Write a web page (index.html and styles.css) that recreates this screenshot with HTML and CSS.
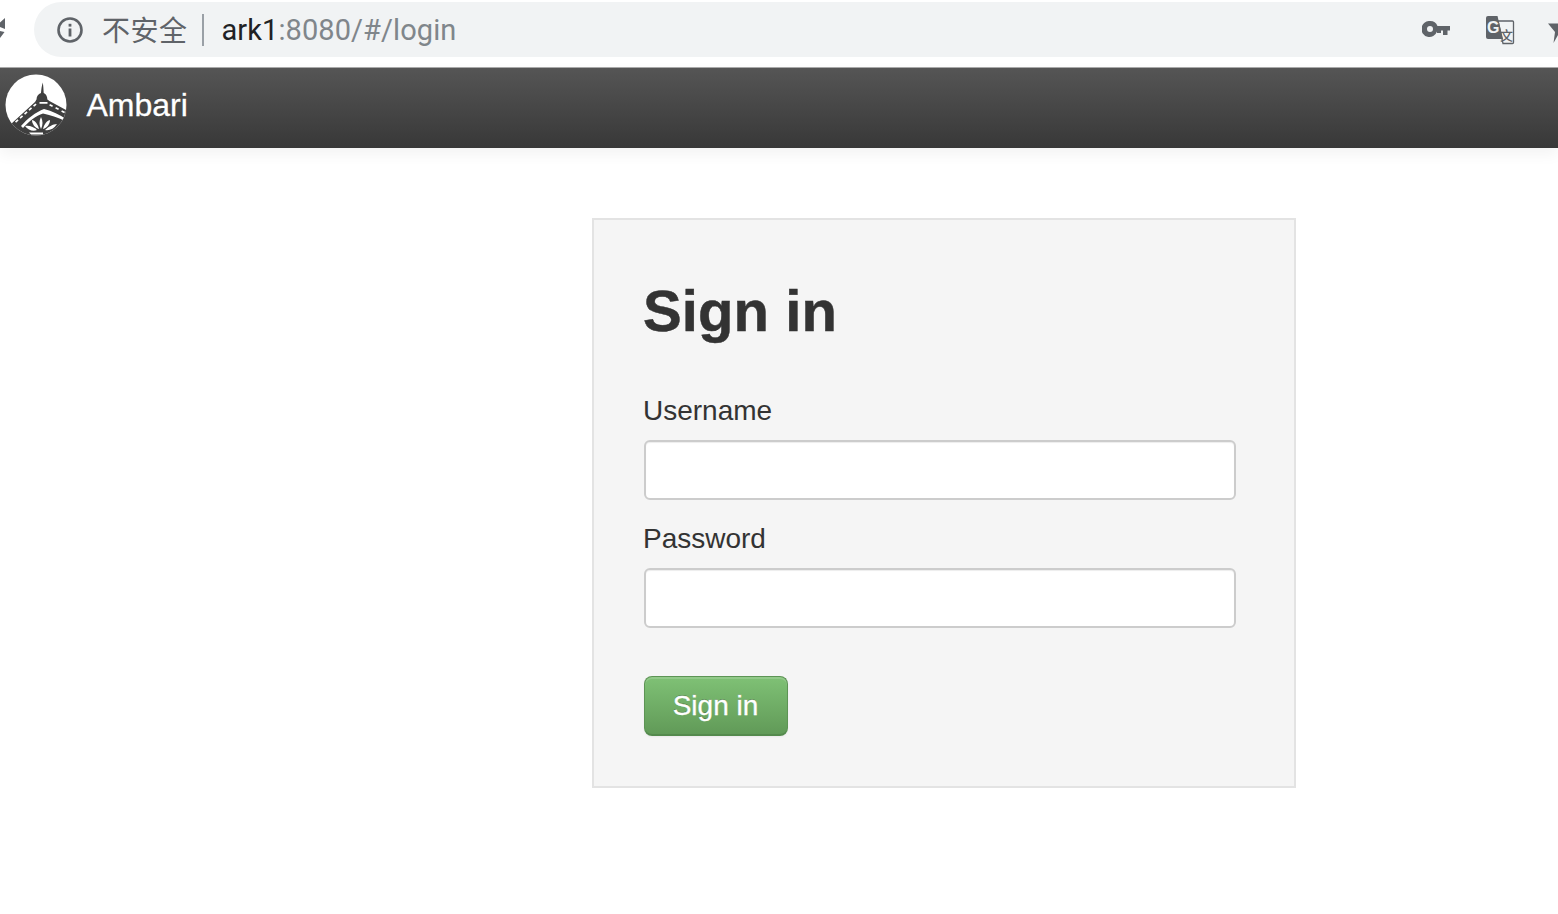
FILE: index.html
```html
<!DOCTYPE html>
<html lang="zh">
<head>
<meta charset="utf-8">
<title>Ambari</title>
<link rel="stylesheet" href="styles.css">
</head>
<body>
<header class="toolbar">
  <svg class="reload" viewBox="0 0 5 20" aria-hidden="true"><path d="M5 0V11L0 9V4.500z M0 13L4.500 14L0 20z" fill="#5f6368"/></svg>
  <div class="omnibox">
    <svg class="info" viewBox="0 0 28 28" aria-hidden="true"><circle cx="14" cy="14" r="11.500" fill="none" stroke="#5f6368" stroke-width="2.600"/><rect x="12.600" y="12.500" width="2.800" height="8" fill="#5f6368"/><rect x="12.600" y="7.800" width="2.800" height="2.800" fill="#5f6368"/></svg>
    <span class="insecure">不安全</span>
    <span class="sep"></span>
    <span class="url"><span class="host">ark1</span>:8080/#/login</span>
    <div class="actions">
      <svg class="key" viewBox="0 0 28 16" aria-hidden="true"><path fill-rule="evenodd" d="M8 0a8 8 0 0 1 7.500 5H28v4.500h-2.500V14H21V9.500h-2V12h-4V10.500A8 8 0 1 1 8 0zM8 5a3 3 0 1 0 0 6a3 3 0 0 0 0-6z" fill="#5f6368"/></svg>
      <svg class="translate" viewBox="0 0 28 28" aria-hidden="true">
        <path d="M12 5h14.500a1 1 0 0 1 1 1v20.500a1 1 0 0 1-1 1H17L12 5z" fill="#f1f3f4" stroke="#5f6368" stroke-width="1.300"/>
        <path d="M2 0h9.500l5.500 23H2a2 2 0 0 1-2-2V2a2 2 0 0 1 2-2z" fill="#5f6368"/>
        <text x="1" y="16.500" class="tr-g">G</text>
        <text x="14" y="23.500" class="tr-z">文</text>
      </svg>
      <svg class="star" viewBox="0 0 10 28" aria-hidden="true"><path d="M0 7.500H10V19L5.500 27L7 16z" fill="#5f6368"/></svg>
    </div>
  </div>
</header>
<nav class="navbar">
  <svg class="logo" viewBox="0 0 62 62" aria-hidden="true">
    <clipPath id="disc"><circle cx="31" cy="31" r="30.500"/></clipPath>
    <circle cx="31" cy="31" r="30.500" fill="#fff"/>
    <g clip-path="url(#disc)" fill="#3f3f3f">
      <path d="M37.800 8.500c.5 3 .7 7 .9 10.500 2.500 1 3.500 3.500 3.700 6.500l2 1.500L62 36.500V62H0V57L6 50 30 28l1.500-2.500c.2-3 1.500-5.500 4.500-6.500.3-3.500.8-7.500 1.800-10.500z"/>
    </g>
    <g clip-path="url(#disc)" fill="#fff">
      <path d="M34.500 28h8v1.800h-8zM28 31.500l2.500-2 1.100 1.300-2.500 2zM23.500 35.500l2.500-2.200 1.100 1.200-2.500 2.200zM19 39.500l2.500-2.200 1.100 1.200-2.500 2.200zM14.500 43.500l2.500-2.200 1.100 1.200-2.500 2.200zM10 47.500l2.500-2.200 1.100 1.200-2.500 2.200zM45 30l3 1.400-.8 1.500-3-1.400zM51 33l3 1.500-.8 1.500-3-1.500zM57 36.200l3 1.500-.8 1.500-3-1.500z"/>
      <path d="M39 35C31 38 22 45 16 52L18 54C24 47 31 42 38 39.500C46 41 54 44 60 47L61 45C55 41 47 37 39 35z"/>
      <path d="M36 43C38 47 38 51 36 55C34 51 34 47 36 43z"/>
      <path d="M27 46C31 47 33 51 34 55C30 54 27 50 27 46z"/>
      <path d="M45 46C41 47 39 51 38 55C42 54 45 50 45 46z"/>
      <path d="M20 52C24 51 29 53 32 56C28 58 23 56 20 52z"/>
      <path d="M52 50C48 50 43 53 40 56C44 57 49 55 52 50z"/>
      <path d="M24 58.500H38V60.500H26z"/>
    </g>
  </svg>
  <a class="brand">Ambari</a>
</nav>
<main class="page">
  <form class="card">
    <h2 class="title">Sign in</h2>
    <div class="field">
      <label class="label" for="u">Username</label>
      <input class="input" id="u" type="text">
    </div>
    <div class="field">
      <label class="label" for="p">Password</label>
      <input class="input" id="p" type="password">
    </div>
    <button class="btn" type="button">Sign in</button>
  </form>
</main>
</body>
</html>
```
FILE: styles.css
```css
* { box-sizing: border-box; }
html, body { margin: 0; padding: 0; height: 100%; }
body {
  background: #fff;
  overflow: hidden;
  font-family: "Liberation Sans", Arial, sans-serif;
  color: #333;
}
.toolbar {
  display: flex;
  height: 67px;
  padding-top: 2px;
  padding-bottom: 10px;
  background: #fff;
}
.reload { width: 5px; height: 20px; margin: 16px 29px 0 0; flex: none; }
.omnibox {
  flex: 1;
  display: flex;
  align-items: center;
  height: 55px;
  padding-left: 22px;
  background: #f1f3f4;
  border-radius: 28px 0 0 28px;
}
.info { width: 28px; height: 28px; flex: none; margin-top: 1px; }
.insecure {
  margin: 0 0 2px 18px;
  font: 28px/36px "Noto Sans CJK SC", sans-serif;
  color: #5f6368;
  letter-spacing: .5px;
}
.sep { width: 2px; height: 32px; margin-left: 14px; background: #9aa0a6; }
.url {
  margin-left: 18px;
  font: 29px/36px Roboto, sans-serif;
  letter-spacing: .08px;
  color: #80868b;
}
.host { color: #202124; }
.actions { margin-left: auto; display: flex; align-items: center; }
.key { width: 28px; height: 16px; flex: none; margin-bottom: 1px; }
.translate { width: 28px; height: 28px; flex: none; margin-left: 36px; margin-top: 1px; overflow: visible; }
.tr-g { font: bold 16px "Liberation Sans", sans-serif; fill: #f1f3f4; }
.tr-z { font: 500 13px "Noto Sans CJK SC", sans-serif; fill: #5f6368; }
.star { width: 10px; height: 28px; flex: none; margin-left: 34px; }
.navbar {
  display: flex;
  align-items: flex-start;
  height: 81px;
  padding: 6px 0 0 5px;
  border-top: 1px solid #a9a9a9;
  background: linear-gradient(#555555, #383838);
  box-shadow: 0 6px 14px rgba(0, 0, 0, .05);
  position: relative;
}
.logo { width: 62px; height: 62px; flex: none; }
.brand {
  margin: 11px 0 0 19.500px;
  font-size: 32px;
  line-height: 40px;
  color: #fff;
  -webkit-text-stroke: .3px #fff;
  text-shadow: 0 -1px 0 rgba(0, 0, 0, .25);
}
.page { padding: 70px 0 0 592px; }
.card {
  width: 704px;
  height: 570px;
  padding: 48px 58px 0 50px;
  background: #f5f5f5;
  border: 2px solid #e3e3e3;
}
.title {
  margin: 0 0 36px -1px;
  font-size: 58px;
  line-height: 86px;
  font-weight: bold;
  letter-spacing: .1px;
  color: #333;
  -webkit-text-stroke: .5px #333;
}
.field { margin-bottom: 18px; }
.label {
  display: block;
  margin: 0 0 8px -1px;
  font-size: 28px;
  line-height: 42px;
  color: #333;
}
.input {
  display: block;
  width: 100%;
  height: 60px;
  background: #fff;
  border: 2px solid #ccc;
  border-radius: 6px;
  box-shadow: inset 0 1px 1px rgba(0, 0, 0, .075);
}
.btn {
  display: block;
  width: 144px;
  height: 60px;
  margin-top: 48px;
  padding: 0 1px 0 0;
  font: 28px/40px "Liberation Sans", Arial, sans-serif;
  color: #fff;
  -webkit-text-stroke: .3px #fff;
  text-shadow: 0 -1px 0 rgba(0, 0, 0, .25);
  background: linear-gradient(#7fc175, #619a58);
  border: 1px solid #5d9455;
  border-bottom: 2px solid #548a4d;
  border-radius: 8px;
  box-shadow: inset 0 2px 0 rgba(255, 255, 255, .15), 0 1px 2px rgba(0, 0, 0, .05);
}
```
